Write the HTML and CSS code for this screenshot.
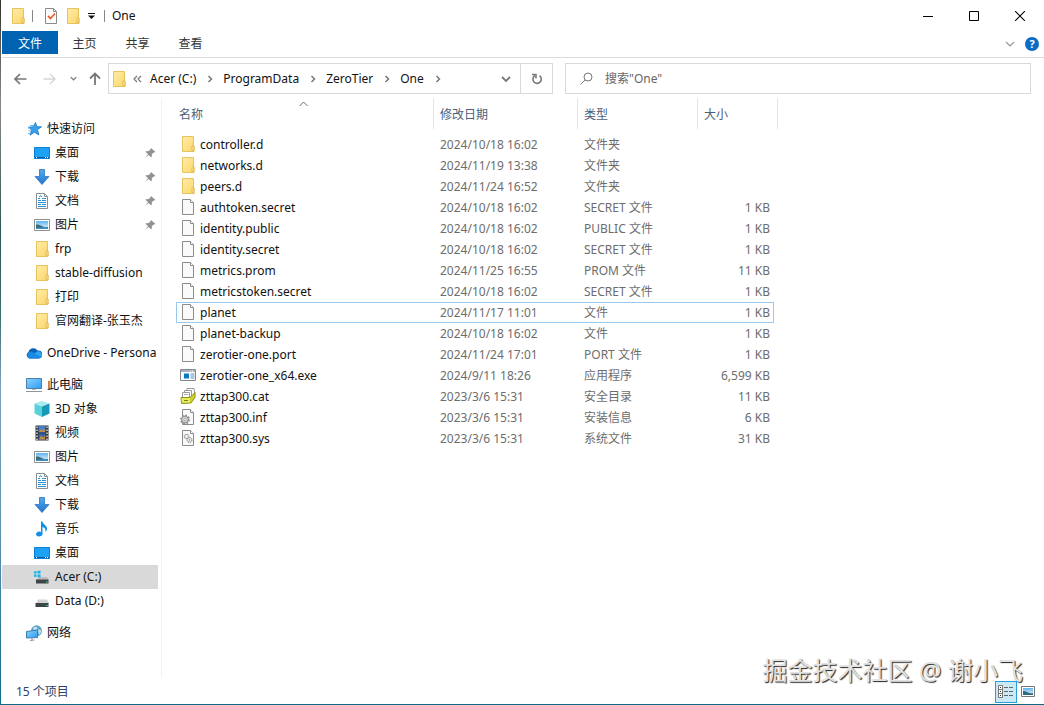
FILE: index.html
```
<!DOCTYPE html>
<html lang="zh-CN">
<head>
    <meta charset="UTF-8">
    <meta name="viewport" content="width=device-width, initial-scale=1.0">
    <title>One</title>
    <link rel="stylesheet" href="styles.css">
</head>
<body>

<!-- icon sprite -->
<svg class="sprite" aria-hidden="true">
    <defs>
        <linearGradient id="fold" x1="0" y1="0" x2="1" y2="1"><stop offset="0" stop-color="#ffeca8"/><stop offset="1" stop-color="#fbd76b"/></linearGradient>
        <linearGradient id="sky" x1="0" y1="0" x2="0" y2="1"><stop offset="0" stop-color="#5fb2ea"/><stop offset="1" stop-color="#eef8ff"/></linearGradient>
        <linearGradient id="screen" x1="0" y1="0" x2="1" y2="1"><stop offset="0" stop-color="#8ed2ff"/><stop offset="1" stop-color="#2b9df0"/></linearGradient>
        <linearGradient id="blue" x1="0" y1="0" x2="0" y2="1"><stop offset="0" stop-color="#55a8ea"/><stop offset="1" stop-color="#2574cf"/></linearGradient>
    </defs>
    <symbol id="folder" viewBox="0 0 16 16">
        <path d="M2.5.5h11v9.500h.5v5.500H2.500z" fill="url(#fold)" stroke="#e6c35c"/>
        <path d="M12 15V10.500l1-1.500 1 1V15z" fill="#ffe28a" stroke="#dcb44b" stroke-width=".8"/>
    </symbol>
    <symbol id="file" viewBox="0 0 16 16">
        <path d="M2.500.5h8l3 3v12h-11z" fill="#fafafa" stroke="#8c8c8c"/>
        <path d="M10.500.5v3h3" fill="#fff" stroke="#8c8c8c"/>
    </symbol>
    <symbol id="exe" viewBox="0 0 16 16">
        <path d="M.5 2.500h15v11H.5z" fill="#fff" stroke="#808890"/>
        <path d="M1 3h14v2H1z" fill="#a9b2ba"/>
        <path d="M10 3.500h1v1h-1zM12 3.500h1v1h-1z" fill="#fff"/>
        <path d="M4 6.500h5v5H4z" fill="#0a78c8"/>
        <path d="M10.500 7h4M10.500 9h4M10.500 11h4" stroke="#5b8db8"/>
    </symbol>
    <symbol id="cat" viewBox="0 0 16 16">
        <path d="M7 .5h7l1 7-5 3-3-1z" fill="#fff" stroke="#999"/>
        <path d="M4.500 2.500h7v7h-7z" fill="#fff" stroke="#999"/>
        <path d="M2.500 4.500h7v5h-7z" fill="#fff" stroke="#999"/>
        <path d="M4 6.500h4" stroke="#aaa"/>
        <path d="M1 9.500h9l5-5v5l-4 5.500-9.500.5z" fill="#cfd22a" stroke="#8e921c"/>
        <path d="M1.500 10h8.500v4.500H2z" fill="#eaec60"/>
        <path d="M4 12.500h4" stroke="#7c8018"/>
    </symbol>
    <symbol id="inf" viewBox="0 0 16 16">
        <use href="#file"/>
        <circle cx="5" cy="10.500" r="4" fill="#ccc" stroke="#8a8a8a" stroke-width="2" stroke-dasharray="1.600 1.500"/>
        <circle cx="5" cy="10.500" r="3.300" fill="#dcdcdc" stroke="#8c8c8c"/>
        <circle cx="5" cy="10.500" r="1.200" fill="#fff" stroke="#888" stroke-width=".7"/>
    </symbol>
    <symbol id="sys" viewBox="0 0 16 16">
        <use href="#file"/>
        <circle cx="6.500" cy="6.500" r="2.200" fill="#eee" stroke="#999" stroke-width="1.200" stroke-dasharray="1.400 .6"/>
        <circle cx="9.500" cy="10" r="2.400" fill="#eee" stroke="#999" stroke-width="1.200" stroke-dasharray="1.400 .6"/>
        <circle cx="9.500" cy="10" r=".7" fill="#888"/>
    </symbol>
    <symbol id="check" viewBox="0 0 16 16">
        <path d="M2.500.5h8l3 3v12h-11z" fill="#fdfdfd" stroke="#8a8a8a"/>
        <path d="M10.500.5v3h3" fill="none" stroke="#8a8a8a"/>
        <path d="M5 8l2.500 2.500L12 5.500" fill="none" stroke="#e8622c" stroke-width="1.800"/>
    </symbol>
    <symbol id="star" viewBox="0 0 16 16">
        <path d="M9.500 1.500l1.300 4.200 4.700.1-4 2.900 1.300 5.300-4.300-2.800-4.500 3 1.700-5.100-3.200-3 4.500-.2z" fill="#35a0ec" stroke="#1976c8" stroke-width=".8"/>
        <path d="M4 4.500h3M2 7h2M2.500 10h2.500M2 12.500h2.500" stroke="#6ab8ef"/>
    </symbol>
    <symbol id="desktop" viewBox="0 0 16 16">
        <path d="M.5 2.500h15v11H.5z" fill="#1ca1f7" stroke="#0d7fd0"/>
        <path d="M1 12.500h14" stroke="#0a5da3"/>
        <path d="M2 12.500h1M11 12.500h1M13 12.500h1" stroke="#fff"/>
    </symbol>
    <symbol id="download" viewBox="0 0 16 16">
        <path d="M5.500.5h5v7h4.500l-7 8-7-8h4.500z" fill="url(#blue)" stroke="#2a76c4" stroke-width=".8"/>
    </symbol>
    <symbol id="document" viewBox="0 0 16 16">
        <path d="M2.500.5h8l3 3v12h-11z" fill="#fff" stroke="#8a8f94"/>
        <path d="M10.500.5v3h3" fill="none" stroke="#8a8f94"/>
        <path d="M4 5.500h2M8 5.500h4M4 7.500h3M8 7.500h4M4 9.500h8M4 11.500h3M8 11.500h4M4 13.500h8" stroke="#2b8fd0"/>
        <path d="M5 4l2-1.500L8 4" fill="none" stroke="#2b8fd0"/>
    </symbol>
    <symbol id="picture" viewBox="0 0 16 16">
        <path d="M.5 2.500h15v11H.5z" fill="#fff" stroke="#8a8f94"/>
        <path d="M2 4h12v8H2z" fill="url(#sky)"/>
        <path d="M2 7.500c3-.5 5 1 7 2s3 .5 5 .5v2H2z" fill="#3a6c74"/>
        <path d="M2 11c4-1 8-1 12-.5V12H2z" fill="#3e8fc6"/>
    </symbol>
    <symbol id="onedrive" viewBox="0 0 16 16">
        <path d="M3.500 13.500A3.500 3.500 0 0 1 2.500 7 5 5 0 0 1 11.500 5.500 4 4 0 0 1 13 13.500z" fill="#0c62ba"/>
        <path d="M4 13.500A3.400 3.400 0 0 1 3.500 7c2-.5 3 .2 4.500 1.200l6.500 3.800a3 3 0 0 1-2 1.500z" fill="#1a8ae2"/>
        <path d="M8 8.200l3.500-1.800C14 6 16 8 16 10.200a3 3 0 0 1-1 2z" fill="#2ba6f0"/>
    </symbol>
    <symbol id="computer" viewBox="0 0 16 16">
        <path d="M.5 1.500h15v10H.5z" fill="url(#screen)" stroke="#4a82ad"/>
        <path d="M6 12h4v1H6z" fill="#b0bac2"/>
        <path d="M0 14.500h16" stroke="#8e979e"/>
    </symbol>
    <symbol id="cube" viewBox="0 0 16 16">
        <path d="M8 0l7.500 2.500L8 5.500.5 2.500z" fill="#a8eaf0"/>
        <path d="M.5 2.500l7.500 3V16l-7.500-3.500z" fill="#5ccfdd"/>
        <path d="M15.500 2.500L8 5.500V16l7.500-3.500z" fill="#1599b5"/>
    </symbol>
    <symbol id="video" viewBox="0 0 16 16">
        <path d="M1.500.5h13v15h-13z" fill="#333"/>
        <path d="M4.500 1h7v6.500h-7z" fill="#3f7fd2"/>
        <path d="M4.500 8.500h7V15h-7z" fill="#3462a8"/>
        <path d="M5 7l2-3.500 1.500 2L10 2.500 11 7zM5 14.500l2-4 2 2 2-2v4z" fill="#c98a37"/>
        <path d="M3 1.500v14M13 1.500v14" stroke="#fff" stroke-width="1.200" stroke-dasharray="1.500 1.500"/>
    </symbol>
    <symbol id="music" viewBox="0 0 16 16">
        <path d="M7 .5h1.500c.5 3 4.500 4 4.500 7 0 2-1 3-1.500 3.500.5-3-1-4.500-3-5V13c0 1.500-1.500 2.500-3.500 2.500S2 14.500 2 13.300 3.500 10.500 5 10.500c.8 0 1.500.2 2 .5z" fill="#128fe8"/>
    </symbol>
    <symbol id="drive" viewBox="0 0 16 16">
        <path d="M4 6.500h9l2 4H2z" fill="#d2d2d2"/>
        <path d="M1.500 10h13v4h-13z" fill="#3f4448"/>
        <path d="M12 12.500h1.500" stroke="#4be08a"/>
    </symbol>
    <symbol id="windrive" viewBox="0 0 16 16">
        <path d="M5 8h8l2 3H2z" fill="#bcbcbc"/>
        <path d="M2 10.500h12.500v4H2z" fill="#3f4448"/>
        <path d="M12 13h1.500" stroke="#4be08a"/>
        <path d="M0 2.500l2.500-.4v2.500H0zM3.500 2L6.500 1.500v3h-3zM0 5.500h2.500V8L0 7.700zM3.500 5.500h3v3l-3-.4z" fill="#12b3e8"/>
    </symbol>
    <symbol id="network" viewBox="0 0 16 16">
        <circle cx="10.500" cy="5.800" r="5.500" fill="#5a9fc4"/>
        <path d="M7 3c2-2 4-1.500 4.500 0S9 5 8 6zM12 5c2-1 3 0 3.500 1.500L13 10z" fill="#c3e1ec"/>
        <path d="M.5 6.500L11.500 5v7.500L.5 13z" fill="url(#screen)" stroke="#3c7eb0"/>
        <path d="M4 15.500l4.500-.5M6 13v2" stroke="#8b99a3"/>
    </symbol>
    <symbol id="pin" viewBox="0 0 12 12">
        <path d="M7 1l4.500 4-1.200.6-.8-.2-1.800 2 .2 2-1 .8L4.600 8 .8 11.300 4 7.200 1.500 4.800l1-.8 2 .3 2-2z" fill="#8d9297"/>
    </symbol>
    <symbol id="chev-right" viewBox="0 0 8 8"><path d="M2.500 1l3 3-3 3" fill="none" stroke="#777" stroke-width="1.500"/></symbol>
    <symbol id="chev-down" viewBox="0 0 10 10"><path d="M1 3l4 4 4-4" fill="none" stroke="currentColor" stroke-width="1.800"/></symbol>
</svg>

<div class="window">
    <header class="titlebar">
        <svg class="icon"><use href="#folder"/></svg>
        <span class="divider"></span>
        <button class="quick" aria-label="属性"><svg class="icon"><use href="#check"/></svg></button>
        <button class="quick" aria-label="新建文件夹"><svg class="icon"><use href="#folder"/></svg></button>
        <button class="quick-more" aria-label="自定义快速访问工具栏"><svg width="7" height="6" viewBox="0 0 7 6"><path d="M0 .5h7" stroke="#111"/><path d="M0 2.500h7L3.500 6z" fill="#111"/></svg></button>
        <span class="divider"></span>
        <h1 class="title">One</h1>
        <div class="controls">
            <button aria-label="最小化"><svg width="10" height="10" viewBox="0 0 10 10"><path d="M0 5.500h10" stroke="#000"/></svg></button>
            <button aria-label="最大化"><svg width="10" height="10" viewBox="0 0 10 10"><path d="M.5.5h9v9h-9z" fill="none" stroke="#000"/></svg></button>
            <button aria-label="关闭"><svg width="10" height="10" viewBox="0 0 10 10"><path d="M0 0l10 10M10 0L0 10" stroke="#000" stroke-width="1.100"/></svg></button>
        </div>
    </header>

    <nav class="ribbon">
        <button class="tab file-tab">文件</button>
        <button class="tab">主页</button>
        <button class="tab">共享</button>
        <button class="tab">查看</button>
        <div class="ribbon-end">
            <button class="expand" aria-label="展开功能区"><svg width="10" height="10" viewBox="0 0 10 10"><path d="M1 3l4 4 4-4" fill="none" stroke="#999" stroke-width="1.200"/></svg></button>
            <button class="help" aria-label="帮助">?</button>
        </div>
    </nav>

    <div class="toolbar">
        <div class="history">
            <button aria-label="后退"><svg width="13" height="12" viewBox="0 0 13 12"><path d="M12.500 6H1.500M6 1L1 6l5 5" fill="none" stroke="#777" stroke-width="1.700"/></svg></button>
            <button aria-label="前进"><svg width="13" height="12" viewBox="0 0 13 12"><path d="M.5 6h11M7 1l5 5-5 5" fill="none" stroke="#d6d6d6" stroke-width="1.400"/></svg></button>
            <button class="recent" aria-label="最近浏览的位置"><svg width="7" height="7"><use href="#chev-down"/></svg></button>
            <button class="up" aria-label="上移"><svg width="12" height="13" viewBox="0 0 12 13"><path d="M6 13V1.500M1 6.500l5-5 5 5" fill="none" stroke="#777" stroke-width="1.800"/></svg></button>
        </div>
        <div class="address">
            <svg class="icon"><use href="#folder"/></svg>
            <svg class="more" width="9" height="8" viewBox="0 0 9 8"><path d="M4 1L1 4l3 3M8 1L5 4l3 3" fill="none" stroke="#777" stroke-width="1.200"/></svg>
            <a href="#">Acer (C:)</a>
            <svg class="sep"><use href="#chev-right"/></svg>
            <a href="#">ProgramData</a>
            <svg class="sep"><use href="#chev-right"/></svg>
            <a href="#">ZeroTier</a>
            <svg class="sep"><use href="#chev-right"/></svg>
            <a href="#">One</a>
            <svg class="sep"><use href="#chev-right"/></svg>
            <button class="drop" aria-label="以前的位置"><svg width="10" height="10"><use href="#chev-down"/></svg></button>
            <button class="refresh" aria-label="刷新"><svg width="12" height="12" viewBox="0 0 12 12"><path d="M8.500 2.700A4.200 4.200 0 1 1 4 2.500" fill="none" stroke="#777" stroke-width="1.600"/><path d="M1 1.500h4v4" fill="none" stroke="#777" stroke-width="1.500"/></svg></button>
        </div>
        <label class="search">
            <svg width="13" height="13" viewBox="0 0 13 13"><circle cx="8" cy="5" r="4" fill="none" stroke="#777"/><path d="M5.200 7.800L.5 12.500" stroke="#777"/></svg>
            <input type="search" placeholder="搜索&quot;One&quot;" aria-label="搜索">
        </label>
    </div>

    <div class="content">
        <nav class="sidebar">
            <ul>
                <li><a class="root" href="#"><svg class="icon"><use href="#star"/></svg>快速访问</a></li>
                <li><a href="#"><svg class="icon"><use href="#desktop"/></svg>桌面<svg class="pin"><use href="#pin"/></svg></a></li>
                <li><a href="#"><svg class="icon"><use href="#download"/></svg>下载<svg class="pin"><use href="#pin"/></svg></a></li>
                <li><a href="#"><svg class="icon"><use href="#document"/></svg>文档<svg class="pin"><use href="#pin"/></svg></a></li>
                <li><a href="#"><svg class="icon"><use href="#picture"/></svg>图片<svg class="pin"><use href="#pin"/></svg></a></li>
                <li><a href="#"><svg class="icon"><use href="#folder"/></svg>frp</a></li>
                <li><a href="#"><svg class="icon"><use href="#folder"/></svg>stable-diffusion</a></li>
                <li><a href="#"><svg class="icon"><use href="#folder"/></svg>打印</a></li>
                <li><a href="#"><svg class="icon"><use href="#folder"/></svg>官网翻译-张玉杰</a></li>
            </ul>
            <ul>
                <li><a class="root" href="#"><svg class="icon"><use href="#onedrive"/></svg>OneDrive - Persona</a></li>
            </ul>
            <ul>
                <li><a class="root" href="#"><svg class="icon"><use href="#computer"/></svg>此电脑</a></li>
                <li><a href="#"><svg class="icon"><use href="#cube"/></svg>3D 对象</a></li>
                <li><a href="#"><svg class="icon"><use href="#video"/></svg>视频</a></li>
                <li><a href="#"><svg class="icon"><use href="#picture"/></svg>图片</a></li>
                <li><a href="#"><svg class="icon"><use href="#document"/></svg>文档</a></li>
                <li><a href="#"><svg class="icon"><use href="#download"/></svg>下载</a></li>
                <li><a href="#"><svg class="icon"><use href="#music"/></svg>音乐</a></li>
                <li><a href="#"><svg class="icon"><use href="#desktop"/></svg>桌面</a></li>
                <li><a class="current" href="#"><svg class="icon"><use href="#windrive"/></svg>Acer (C:)</a></li>
                <li><a href="#"><svg class="icon"><use href="#drive"/></svg>Data (D:)</a></li>
            </ul>
            <ul>
                <li><a class="root" href="#"><svg class="icon"><use href="#network"/></svg>网络</a></li>
            </ul>
        </nav>

        <main class="files">
            <table>
                <colgroup>
                    <col class="col-name"><col class="col-date"><col class="col-type"><col class="col-size"><col class="col-end">
                </colgroup>
                <thead>
                    <tr>
                        <th>名称<svg class="sort" width="9" height="6" viewBox="0 0 9 6"><path d="M.5 5l4-4 4 4" fill="none" stroke="#666"/></svg></th>
                        <th>修改日期</th>
                        <th>类型</th>
                        <th colspan="2">大小</th>
                    </tr>
                </thead>
                <tbody>
                    <tr><td><svg class="icon"><use href="#folder"/></svg>controller.d</td><td>2024/10/18 16:02</td><td>文件夹</td><td></td></tr>
                    <tr><td><svg class="icon"><use href="#folder"/></svg>networks.d</td><td>2024/11/19 13:38</td><td>文件夹</td><td></td></tr>
                    <tr><td><svg class="icon"><use href="#folder"/></svg>peers.d</td><td>2024/11/24 16:52</td><td>文件夹</td><td></td></tr>
                    <tr><td><svg class="icon"><use href="#file"/></svg>authtoken.secret</td><td>2024/10/18 16:02</td><td>SECRET 文件</td><td>1 KB</td></tr>
                    <tr><td><svg class="icon"><use href="#file"/></svg>identity.public</td><td>2024/10/18 16:02</td><td>PUBLIC 文件</td><td>1 KB</td></tr>
                    <tr><td><svg class="icon"><use href="#file"/></svg>identity.secret</td><td>2024/10/18 16:02</td><td>SECRET 文件</td><td>1 KB</td></tr>
                    <tr><td><svg class="icon"><use href="#file"/></svg>metrics.prom</td><td>2024/11/25 16:55</td><td>PROM 文件</td><td>11 KB</td></tr>
                    <tr><td><svg class="icon"><use href="#file"/></svg>metricstoken.secret</td><td>2024/10/18 16:02</td><td>SECRET 文件</td><td>1 KB</td></tr>
                    <tr class="focused"><td><svg class="icon"><use href="#file"/></svg>planet</td><td>2024/11/17 11:01</td><td>文件</td><td>1 KB</td></tr>
                    <tr><td><svg class="icon"><use href="#file"/></svg>planet-backup</td><td>2024/10/18 16:02</td><td>文件</td><td>1 KB</td></tr>
                    <tr><td><svg class="icon"><use href="#file"/></svg>zerotier-one.port</td><td>2024/11/24 17:01</td><td>PORT 文件</td><td>1 KB</td></tr>
                    <tr><td><svg class="icon"><use href="#exe"/></svg>zerotier-one_x64.exe</td><td>2024/9/11 18:26</td><td>应用程序</td><td>6,599 KB</td></tr>
                    <tr><td><svg class="icon"><use href="#cat"/></svg>zttap300.cat</td><td>2023/3/6 15:31</td><td>安全目录</td><td>11 KB</td></tr>
                    <tr><td><svg class="icon"><use href="#inf"/></svg>zttap300.inf</td><td>2023/3/6 15:31</td><td>安装信息</td><td>6 KB</td></tr>
                    <tr><td><svg class="icon"><use href="#sys"/></svg>zttap300.sys</td><td>2023/3/6 15:31</td><td>系统文件</td><td>31 KB</td></tr>
                </tbody>
            </table>
        </main>
    </div>

    <footer class="status">
        <span>15 个项目</span>
        <div class="views">
            <button class="view active" aria-label="详细信息"><svg width="16" height="14" viewBox="0 0 16 14"><path d="M.5.5h4v12h-4zM.5 4.500h4M.5 8.500h4" fill="#fff" stroke="#777"/><path d="M2 2.500h1M2 6.500h1M2 10.500h1" stroke="#333"/><path d="M6 2.500h4M11 2.500h4M6 6.500h4M11 6.500h4M6 10.500h4M11 10.500h4" stroke="#666"/></svg></button>
            <button class="view" aria-label="大图标"><svg width="14" height="14" viewBox="0 0 14 14"><path d="M.5 1.500h13v10H.5z" fill="#fff" stroke="#777"/><path d="M2 3h10v7H2z" fill="url(#sky)"/><path d="M2 6c4 0 5 3 10 2v2H2z" fill="#2f6b7c"/></svg></button>
        </div>
    </footer>

    <div class="watermark">掘金技术社区 @ 谢小飞</div>
</div>

</body>
</html>
```

FILE: styles.css
```
* {
    box-sizing: border-box;
}

body {
    margin: 0;
    font-family: "Noto Sans", "Noto Sans CJK SC", sans-serif;
    font-size: 12px;
    line-height: 20px;
    color: #111;
    background: #fff;
}

button {
    display: flex;
    align-items: center;
    justify-content: center;
    padding: 0;
    border: 0;
    background: none;
    font: inherit;
    color: inherit;
}

a {
    color: inherit;
    text-decoration: none;
}

svg {
    flex: none;
}

.sprite {
    position: absolute;
    width: 0;
    height: 0;
}

.icon {
    width: 16px;
    height: 16px;
}

.window {
    position: relative;
    display: flex;
    flex-direction: column;
    min-height: 100vh;
    padding-left: 1px;
    border-left: 1px solid;
    border-image: linear-gradient(#33312a, #8a8a86 15%, #2e5552 33%, #3b6f70 45%, #7ba3bd 55%, #5f93b3 75%, #0f6a85) 1;
    border-bottom: 1px solid #1b7e97;
}

/* title bar */
.titlebar {
    display: flex;
    align-items: center;
    height: 31px;
    padding-left: 8px;
}

.divider {
    width: 1px;
    height: 12px;
    margin: 0 7px 0 6px;
    background: #888;
}

.quick {
    width: 22px;
    height: 22px;
}

.quick-more {
    width: 14px;
    height: 22px;
}

.title {
    margin: 0;
    font-size: 12px;
    font-weight: 400;
}

.controls {
    display: flex;
    margin-left: auto;
    padding-right: 1px;
}

.controls button {
    width: 46px;
    height: 30px;
}

/* ribbon */
.ribbon {
    display: flex;
    height: 27px;
    border-bottom: 1px solid #dadbdc;
}

.tab {
    width: 53px;
    height: 23px;
    padding-top: 2px;
    color: #333;
}

.file-tab {
    width: 56px;
    background: #0063b1;
    color: #fff;
}

.ribbon-end {
    display: flex;
    align-items: center;
    gap: 9px;
    margin-left: auto;
    padding-right: 5px;
}

.expand {
    width: 12px;
}

.help {
    width: 14px;
    height: 14px;
    border-radius: 50%;
    background: #0a6cc4;
    color: #fff;
    font-size: 11px;
    font-weight: 700;
    line-height: 14px;
}

/* navigation toolbar */
.toolbar {
    display: grid;
    grid-template-columns: 94px 445fr 478fr;
    padding: 5px 13px 4px 12px;
}

.history {
    display: flex;
    align-items: center;
    gap: 16px;
    color: #777;
}

.history .recent {
    margin-left: -2px;
}

.history .up {
    margin-left: -4px;
}

.address {
    display: flex;
    align-items: center;
    height: 31px;
    padding-left: 2px;
    border: 1px solid #d9d9d9;
    white-space: nowrap;
}

.more {
    margin: 0 8px 0 6px;
}

.sep {
    width: 8px;
    height: 8px;
    margin: 0 9px 0 10px;
}

.drop {
    width: 28px;
    height: 29px;
    margin-left: auto;
    color: #777;
}

.refresh {
    width: 32px;
    height: 29px;
    border-left: 1px solid #d9d9d9;
}

.search {
    display: flex;
    align-items: center;
    gap: 12px;
    margin-left: 12px;
    padding-left: 14px;
    border: 1px solid #d9d9d9;
}

.search input {
    flex: 1;
    min-width: 0;
    padding: 0;
    border: 0;
    outline: 0;
    font: inherit;
}

.search input::placeholder {
    color: #666;
}

/* body */
.content {
    display: flex;
    flex: 1;
}

.sidebar {
    width: 160px;
    padding-top: 19px;
    border-right: 1px solid #f3f3f3;
}

.sidebar ul {
    margin: 0 3px 8px 0;
    padding: 0;
    list-style: none;
}

.sidebar a {
    display: flex;
    align-items: center;
    gap: 5px;
    height: 24px;
    padding-left: 32px;
    overflow: hidden;
    white-space: nowrap;
}

.sidebar .root {
    padding-left: 24px;
}

.sidebar .current {
    background: #d9d9d9;
}

.pin {
    width: 12px;
    height: 12px;
    margin: 0 2px 0 auto;
}

.files {
    flex: 1;
    padding-left: 14px;
}

table {
    width: 602px;
    table-layout: fixed;
    border-collapse: separate;
    border-spacing: 0;
}

.col-name {
    width: 258px;
}

.col-date {
    width: 144px;
}

.col-type {
    width: 120px;
}

.col-size {
    width: 76px;
}

.col-end {
    width: 4px;
}

th {
    position: relative;
    height: 31px;
    padding: 2px 0 0 6px;
    border-right: 1px solid #e5e5e5;
    color: #4c607a;
    font-weight: 400;
    text-align: left;
}

th:first-child {
    padding-left: 3px;
}

.sort {
    position: absolute;
    top: 3px;
    left: calc(50% - 6px);
}

tbody::before {
    content: "";
    display: block;
    height: 5px;
}

td {
    height: 21px;
    padding: 0 0 0 6px;
    border: 0 solid #99c9ef;
    color: #6d6d6d;
    line-height: 19px;
    white-space: nowrap;
}

td:first-child {
    padding-left: 4px;
    color: #111;
}

td:last-child {
    padding: 0 4px 0 0;
    text-align: right;
}

td .icon {
    margin-right: 4px;
    vertical-align: -3px;
}

.focused td {
    border-width: 1px 0;
}

.focused td:first-child {
    padding-left: 3px;
    border-left-width: 1px;
}

.focused td:last-child {
    padding-right: 3px;
    border-right-width: 1px;
}

/* status bar */
.status {
    display: flex;
    align-items: center;
    justify-content: space-between;
    height: 26px;
    padding: 1px 5px 0 14px;
    color: #2c4163;
}

.views {
    position: relative;
    z-index: 1;
    display: flex;
}

.view {
    width: 22px;
    height: 22px;
}

.view.active {
    border: 1px solid #26a0da;
    background: #cbe8f6;
}

.watermark {
    position: absolute;
    right: 21px;
    bottom: 15px;
    color: #e2e2e2;
    font-size: 25px;
    line-height: 38px;
    text-shadow: 1px 1px 1px #222;
    white-space: nowrap;
}
```
